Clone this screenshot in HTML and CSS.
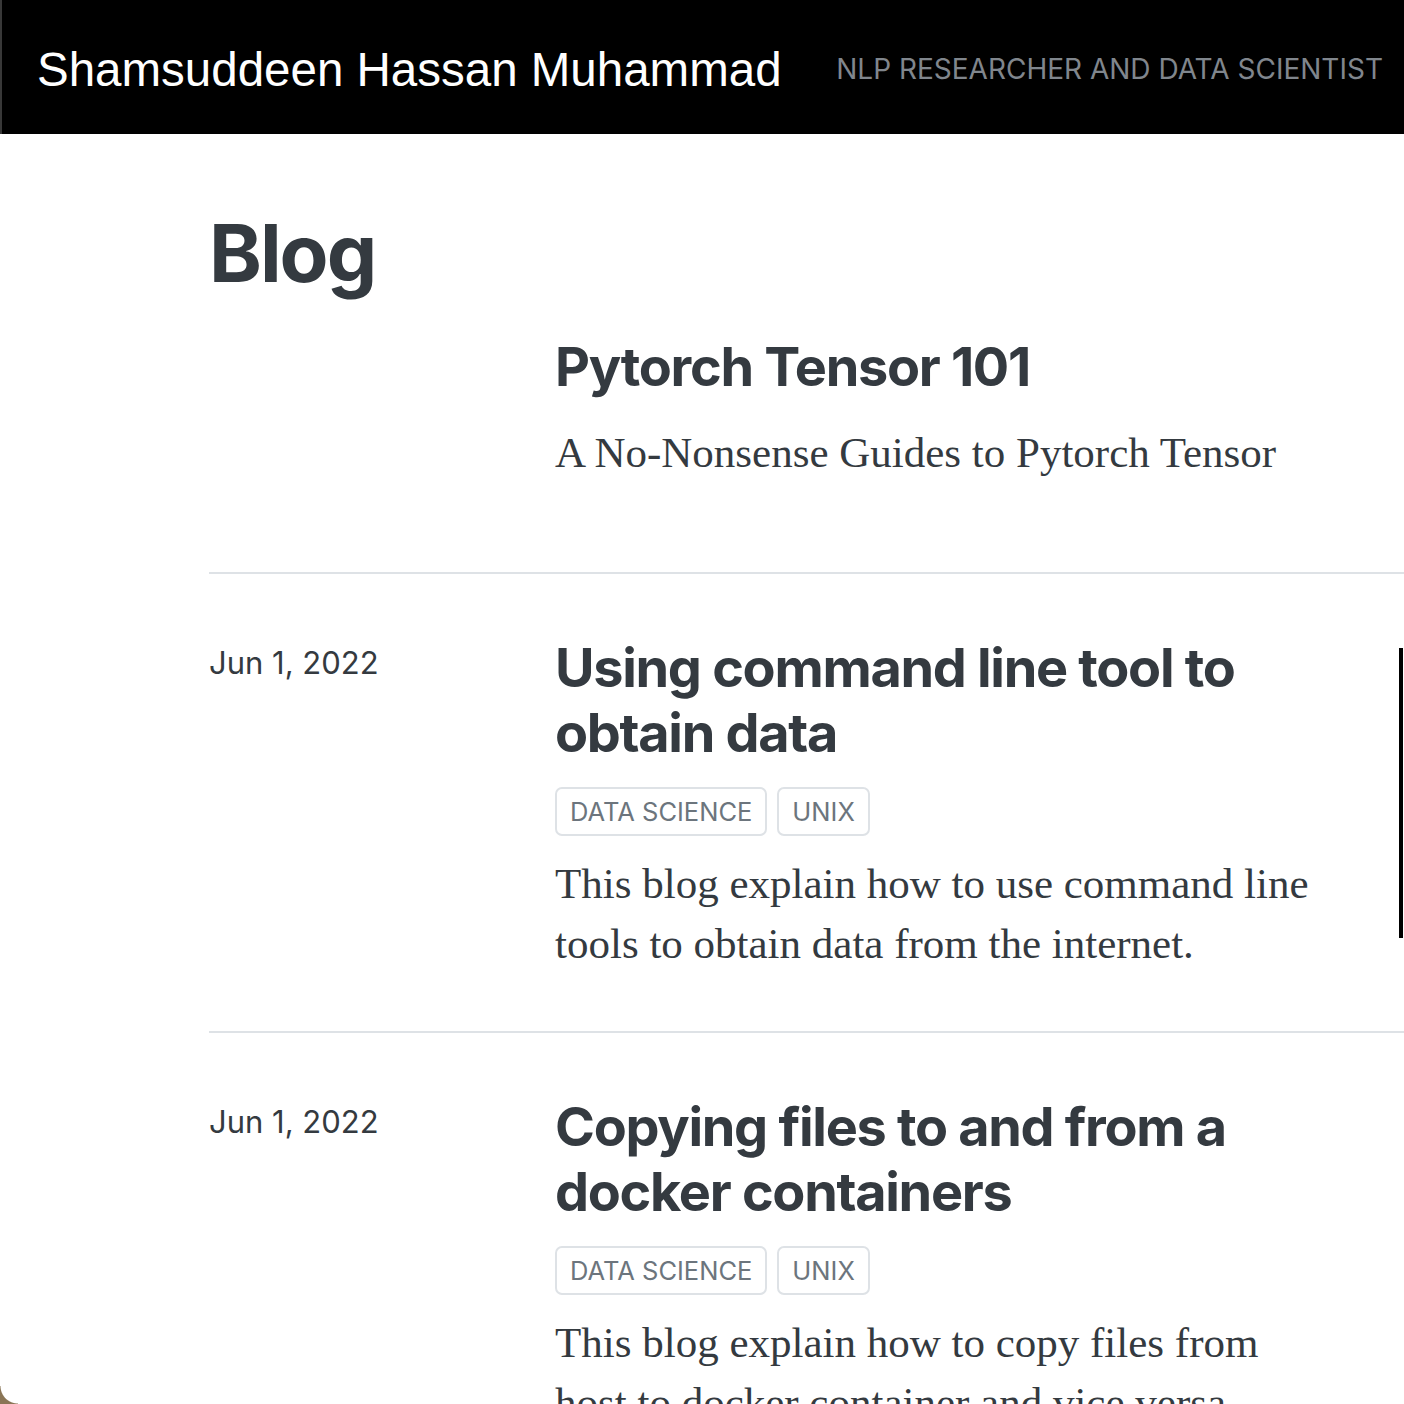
FILE: index.html
```html
<!DOCTYPE html>
<html lang="en">
<head>
<meta charset="utf-8">
<title>Blog</title>
<link rel="stylesheet" href="styles.css">
</head>
<body>
<header class="navbar">
  <div class="brand">Shamsuddeen Hassan Muhammad</div>
  <div class="tagline">NLP RESEARCHER AND DATA SCIENTIST</div>
</header>
<main class="content">
  <h1 class="page-title">Blog</h1>
  <div class="listing">
    <article class="post post-first">
      <div class="post-date"></div>
      <div class="post-body">
        <h3 class="post-title">Pytorch Tensor 101</h3>
        <p class="post-desc">A No-Nonsense Guides to Pytorch Tensor</p>
      </div>
    </article>
    <article class="post">
      <div class="post-date">Jun 1, 2022</div>
      <div class="post-body">
        <h3 class="post-title">Using command line tool to obtain data</h3>
        <div class="tags"><span class="tag">DATA SCIENCE</span><span class="tag">UNIX</span></div>
        <p class="post-desc">This blog explain how to use command line tools to obtain data from the internet.</p>
      </div>
    </article>
    <article class="post">
      <div class="post-date">Jun 1, 2022</div>
      <div class="post-body">
        <h3 class="post-title">Copying files to and from a docker containers</h3>
        <div class="tags"><span class="tag">DATA SCIENCE</span><span class="tag">UNIX</span></div>
        <p class="post-desc">This blog explain how to copy files from host to docker container and vice versa.</p>
      </div>
    </article>
  </div>
</main>
<div class="scroll-thumb"></div>
<div class="corner"></div>
</body>
</html>
```
FILE: styles.css
```css
html, body {
  margin: 0;
  padding: 0;
  background: #fff;
}
body {
  color: #343a40;
  font-family: "Liberation Serif", serif;
  overflow: hidden;
}
.navbar {
  height: 134px;
  background: #000;
  display: flex;
  align-items: center;
  justify-content: space-between;
  padding: 0 21px 0 35px;
  border-left: 2px solid #383838;
  box-sizing: border-box;
}
.brand {
  font-family: "Liberation Sans", Arial, sans-serif;
  font-size: 47.5px;
  color: #fff;
  margin-top: 5px;
}
.tagline {
  font-family: Inter, "Liberation Sans", sans-serif;
  font-size: 28px;
  color: #80868d;
  margin-top: 4px;
}
.content {
  padding-left: 209px;
}
.page-title {
  font-family: Inter, "Liberation Sans", sans-serif;
  font-weight: 700;
  font-size: 80px;
  line-height: 98px;
  margin: 70px 0 0 0;
  letter-spacing: -2px;
}
.listing {
  margin-top: 32px;
}
.post {
  display: grid;
  grid-template-columns: 346px 1fr;
  padding: 61px 0 57px;
  border-bottom: 2px solid #dee2e6;
}
.post-first {
  padding-top: 0;
  padding-bottom: 89px;
}
.post-date {
  font-family: Inter, "Liberation Sans", sans-serif;
  font-size: 31px;
  line-height: 40px;
  padding-top: 8px;
}
.post-title {
  font-family: Inter, "Liberation Sans", sans-serif;
  font-weight: 700;
  font-size: 54px;
  line-height: 65px;
  letter-spacing: -1.3px;
  margin: 0;
  max-width: 760px;
}
.tags {
  display: flex;
  gap: 10px;
  margin-top: 22px;
}
.tag {
  font-family: Inter, "Liberation Sans", sans-serif;
  font-size: 25.5px;
  color: #6c757d;
  border: 2px solid #dee2e6;
  border-radius: 7px;
  height: 49px;
  box-sizing: border-box;
  display: flex;
  align-items: center;
  padding: 0 13px;
}
.post-desc {
  font-size: 43px;
  line-height: 60px;
  margin: 18px 0 0 0;
  max-width: 770px;
}
.post-first .post-desc {
  margin-top: 24px;
}
.scroll-thumb {
  position: fixed;
  right: 1px;
  top: 648px;
  width: 4px;
  height: 290px;
  background: #000;
}
.corner {
  position: fixed;
  left: 0;
  bottom: 0;
  width: 18px;
  height: 18px;
  background: radial-gradient(circle at 100% 0, transparent 17px, #8a7556 18px);
}
```
